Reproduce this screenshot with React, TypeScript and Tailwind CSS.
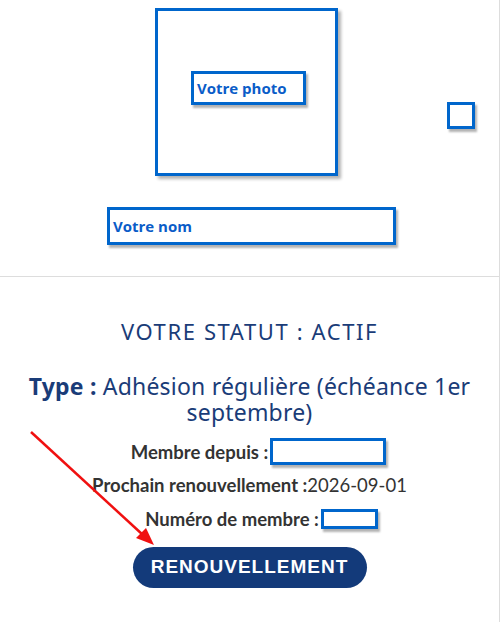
import React from "react";

function Redact({ className, label }: { className: string; label?: string }) {
  return (
    <span
      className={`inline-flex items-center border-[3px] border-[#0066cc] bg-white shadow-[2px_3px_2px_rgba(0,0,0,0.3)] ${className}`}
    >
      {label && (
        <span className="pl-[3px] text-[15px] font-bold text-[#0a5cc8] [font-family:'Open_Sans',sans-serif]">
          {label}
        </span>
      )}
    </span>
  );
}

function Arrow() {
  return (
    <svg className="absolute left-0 top-0" width="503" height="622" viewBox="0 0 503 622">
      <line x1="31" y1="432" x2="143" y2="535" stroke="#f01010" strokeWidth="2.5" />
      <polygon points="154,545 136,538 146,528" fill="#f01010" />
    </svg>
  );
}

export default function App() {
  return (
    <div className="relative w-[503px] h-[622px] overflow-hidden bg-white">
      <div className="flex w-[500px] h-full flex-col border-r border-[#dddddd]">
        {/* Top: photo and name */}
        <div className="relative h-[277px] shrink-0 border-b border-[#dddddd] bg-white">
          <div className="flex flex-col items-center pt-[8px]">
            <div className="ml-[-6px] flex h-[168px] w-[183px] items-center justify-center border-[3px] border-[#0066cc] bg-white shadow-[3px_3px_3px_rgba(0,0,0,0.3)]">
              <Redact className="mt-[-8px] ml-[4px] h-[34px] w-[115px]" label="Votre photo" />
            </div>
            <Redact className="mt-[31px] ml-[4px] h-[38px] w-[289px]" label="Votre nom" />
          </div>
          <Redact className="absolute left-[447px] top-[102px] h-[27px] w-[28px]" />
        </div>

        {/* Bottom: status */}
        <div className="flex flex-1 flex-col items-center bg-white pt-[40px] text-center">
          <h2 className="text-[22px] leading-[28px] text-[#1a3c78] [font-family:'Noto_Sans',sans-serif] tracking-[1.6px]">
            VOTRE STATUT : ACTIF
          </h2>
          <p className="mt-[28px] px-[20px] text-[23px] leading-[26px] text-[#1a3c78] [font-family:'Noto_Sans',sans-serif] tracking-[0.2px]">
            <span className="font-bold">Type :</span> Adhésion régulière (échéance 1er septembre)
          </p>
          <div className="mt-[13px] ml-[18px] flex items-center text-[18.5px] leading-[24px] text-[#333333] [font-family:Lato,sans-serif]">
            <span className="font-bold">Membre depuis :</span>
            <Redact className="ml-[2px] h-[27px] w-[116px]" />
          </div>
          <div className="mt-[8px] text-[18.5px] leading-[24px] text-[#333333] [font-family:Lato,sans-serif]">
            <span className="font-bold">Prochain renouvellement :</span>2026-09-01
          </div>
          <div className="mt-[10px] ml-[24px] flex items-center text-[18.5px] leading-[24px] text-[#333333] [font-family:Lato,sans-serif]">
            <span className="font-bold">Numéro de membre :</span>
            <Redact className="ml-[2px] h-[20px] w-[57px]" />
          </div>
          <button className="mt-[16px] h-[41px] w-[234px] rounded-full bg-[#133a7a] text-[19px] font-black tracking-[1px] text-white [font-family:'Liberation_Sans',Arial,sans-serif]">
            RENOUVELLEMENT
          </button>
        </div>
      </div>
      <Arrow />
    </div>
  );
}
